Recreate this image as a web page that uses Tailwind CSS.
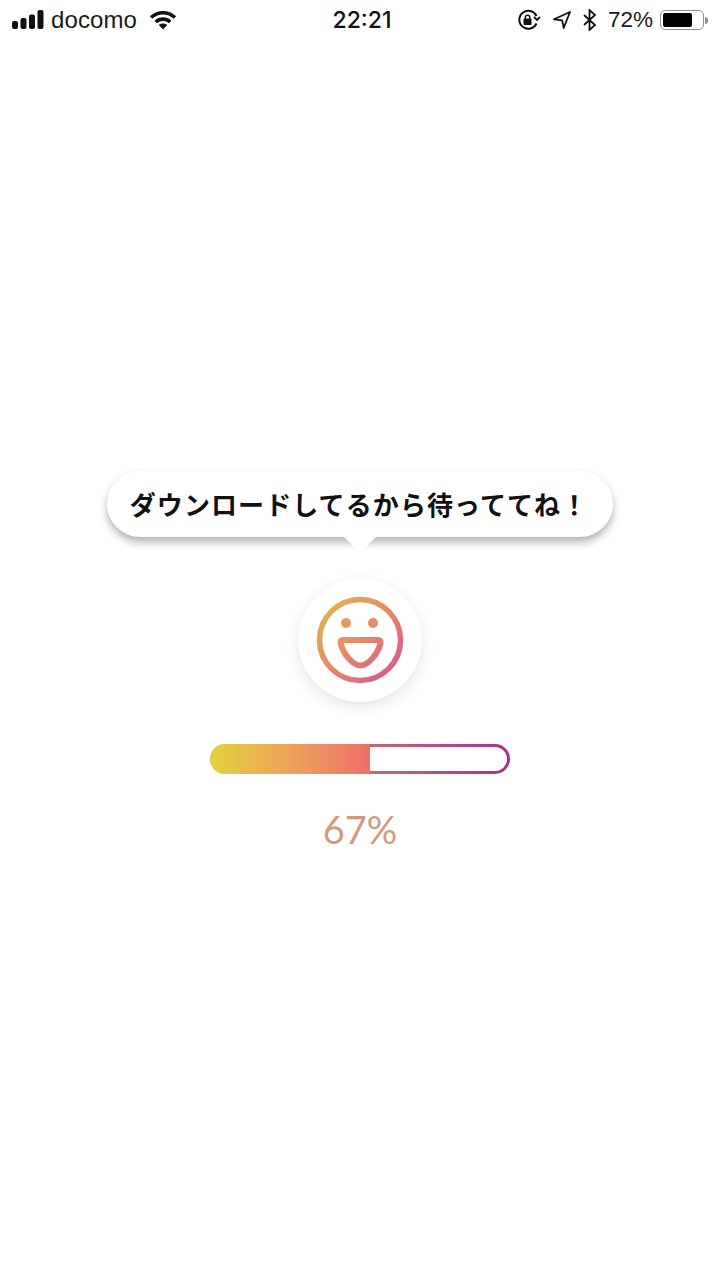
<!DOCTYPE html>
<html lang="ja">
<head>
<meta charset="utf-8">
<script src="https://cdn.jsdelivr.net/npm/@tailwindcss/browser@4"></script>
</head>
<body class="bg-white">
<div class="w-[720px] h-[1280px] bg-white flex flex-col items-center overflow-hidden font-['Roboto','Noto_Sans_CJK_JP',sans-serif]">
  <!-- status bar -->
  <div class="w-full h-10 flex items-center justify-between pl-[12px] pr-[12px] text-[#1a1a1a] text-[22px] leading-none font-['Liberation_Sans',sans-serif]">
    <div class="w-[270px] flex items-center">
      <svg width="32" height="20" viewBox="0 0 32 20" fill="#111"><rect x="0" y="11" width="6" height="8" rx="2"/><rect x="8.500" y="8" width="6" height="11" rx="2"/><rect x="17" y="4.500" width="6" height="14.500" rx="2"/><rect x="25.500" y="0" width="6" height="19" rx="2"/></svg>
      <span class="ml-[7px] text-[24px] tracking-[0.1px]">docomo</span>
      <svg class="ml-[12px]" width="28" height="20" viewBox="0 0 28 20" fill="none" stroke="#111" stroke-width="3.600"><path d="M2 7.500C9 1.200 19 1.200 26 7.500"/><path d="M6.800 12C11 8.200 17 8.200 21.200 12"/><path d="M14 19.500l-4.200-4.400c2.400-2 6-2 8.400 0z" fill="#111" stroke="none"/></svg>
    </div>
    <div class="ml-[4px] font-medium text-[23px] font-['Inter',sans-serif] text-[#111]">22:21</div>
    <div class="w-[270px] flex items-center justify-end">
      <svg width="24" height="22" viewBox="0 0 24 22" fill="none" stroke="#111" stroke-width="2"><path d="M19.500 14.500A9 9 0 1 1 19.500 7"/><path d="M17 8l3 3 3-3" stroke-width="1.800"/><rect x="6.500" y="9.500" width="8" height="6.500" rx="1" fill="#111" stroke="none"/><path d="M8.300 10V8a2.300 2.300 0 0 1 4.500 0v2" stroke-width="1.500"/></svg>
      <svg class="ml-[11px]" width="20" height="20" viewBox="0 0 20 20" fill="none" stroke="#111" stroke-width="1.800" stroke-linejoin="round"><path d="M18 2L2 9.300l8.200 1 1.500 7.700z"/></svg>
      <svg class="ml-[11px]" width="14" height="22" viewBox="0 0 14 22" fill="none" stroke="#111" stroke-width="1.800"><path d="M1 6l11 10-5.500 5V1L12 6 1 16"/></svg>
      <span class="ml-[11px] text-[22.500px]">72%</span>
      <div class="ml-[7px] w-[44px] h-[20px] rounded-[5px] border-[1.500px] border-[#909090] p-[2px]"><div class="w-[29px] h-full bg-black rounded-[2px]"></div></div>
      <div class="ml-[1px] w-[3px] h-[7px] bg-[#909090] rounded-r-sm"></div>
    </div>
  </div>

  <!-- speech bubble -->
  <div class="relative mt-[431px] w-[506px] h-[66px] rounded-[33px] bg-white flex items-center justify-center shadow-[0_5px_9px_rgba(0,0,0,0.3)]">
    <span class="-ml-[2px] text-[26px] leading-none font-bold tracking-[1.100px] text-[#111] whitespace-nowrap font-['Noto_Sans_CJK_JP',sans-serif]">ダウンロードしてるから待っててね！</span>
    <svg class="absolute left-[237px] top-[64px]" width="32" height="17" viewBox="0 0 32 17"><path d="M0 2H32L18 15.500Q16 17 14 15.500Z" fill="#fff"/></svg>
  </div>

  <!-- smiley -->
  <div class="mt-[41px] w-[124px] h-[124px] rounded-full bg-white flex items-center justify-center shadow-[0_5px_14px_rgba(0,0,0,0.11)]">
    <svg width="88" height="88" viewBox="0 0 88 88" fill="none">
      <defs>
        <linearGradient id="g" x1="10" y1="8" x2="78" y2="80" gradientUnits="userSpaceOnUse">
          <stop offset="0" stop-color="#e2b24e"/>
          <stop offset="0.5" stop-color="#e58a68"/>
          <stop offset="1" stop-color="#dc5590"/>
        </linearGradient>
      </defs>
      <circle cx="44" cy="44" r="40.500" stroke="url(#g)" stroke-width="5.500"/>
      <circle cx="30" cy="27" r="5" fill="url(#g)"/>
      <circle cx="57" cy="27" r="5" fill="url(#g)"/>
      <path d="M27 44H62Q65 44 64.500 47C62 58 52 69.500 44.500 69.500C37 69.500 27 58 24.500 47Q24 44 27 44Z" stroke="url(#g)" stroke-width="6" stroke-linejoin="round"/>
    </svg>
  </div>

  <!-- progress -->
  <div class="mt-[42px] w-[300px] h-[30px] rounded-full p-[3px] bg-linear-to-r from-[#e4d03a] via-[#c4667a] via-[54%] to-[#a82c90] relative overflow-hidden">
    <div class="w-full h-full rounded-full bg-white"></div>
    <div class="absolute left-0 top-0 h-full w-[160px] bg-linear-to-r from-[#e4d03a] to-[#ee6f68]"></div>
  </div>

  <div class="mt-[33px] text-[38px] leading-[44px] font-normal text-[#d09a7e] font-['Lato',sans-serif]">67%</div>
</div>
</body>
</html>
